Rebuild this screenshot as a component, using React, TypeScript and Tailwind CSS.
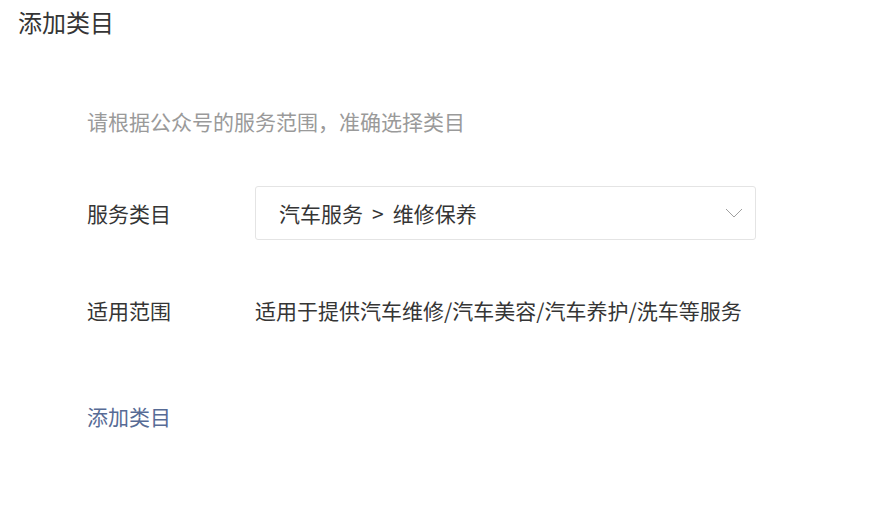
import React from "react";

const font = { fontFamily: '"Noto Sans CJK SC", "Noto Sans", sans-serif' };

const App = () => {
  return (
    <div className="w-[889px] h-[529px] bg-white text-[#353535]" style={font}>
      {/* title */}
      <h2 className="pl-[18px] pt-[4px] text-[24px] leading-[36px] text-[#353535]">添加类目</h2>

      <div className="pl-[87px] pt-[65px]">
        <p className="text-[21px] leading-[32px] text-[#9a9a9a]">请根据公众号的服务范围，准确选择类目</p>

        {/* service category */}
        <div className="flex items-center mt-[49px]">
          <div className="w-[168px] text-[21px] leading-[32px]">服务类目</div>
          <div className="w-[501px] h-[54px] border border-[#e4e4e4] rounded-[3px] flex items-center justify-between pl-[23px] pr-[12px]">
            <span className="text-[21px] leading-[32px] text-[#353535]">
              汽车服务<span className="mx-[9px]">&gt;</span>维修保养
            </span>
            <svg width="18" height="10" viewBox="0 0 18 10" fill="none">
              <path d="M1 1L9 9L17 1" stroke="#a0a0a0" strokeWidth="1" />
            </svg>
          </div>
        </div>

        {/* scope */}
        <div className="flex items-center mt-[54px]">
          <div className="w-[168px] text-[21px] leading-[32px]">适用范围</div>
          <div className="text-[21px] leading-[32px]">适用于提供汽车维修/汽车美容/汽车养护/洗车等服务</div>
        </div>

        <a className="block mt-[74px] text-[21px] leading-[32px] text-[#576b95] cursor-pointer">添加类目</a>
      </div>
    </div>
  );
};

export default App;
